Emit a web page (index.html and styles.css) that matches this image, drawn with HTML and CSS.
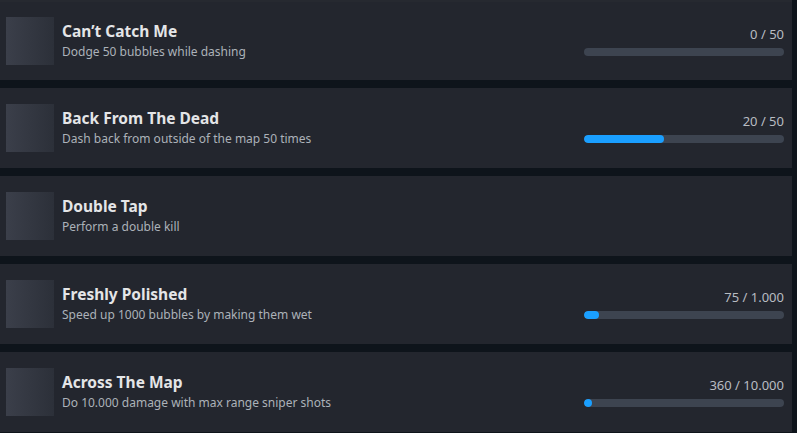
FILE: index.html
```html
<!DOCTYPE html>
<html>
<head>
<meta charset="utf-8">
<link rel="stylesheet" href="styles.css">
</head>
<body>
<div class="list">
  <div class="row first">
    <div class="icon"></div>
    <div class="info">
      <div class="title">Can’t Catch Me</div>
      <div class="desc">Dodge 50 bubbles while dashing</div>
    </div>
    <div class="progress">
      <div class="count">0 / 50</div>
      <div class="track"></div>
    </div>
  </div>
  <div class="row">
    <div class="icon"></div>
    <div class="info">
      <div class="title">Back From The Dead</div>
      <div class="desc">Dash back from outside of the map 50 times</div>
    </div>
    <div class="progress">
      <div class="count">20 / 50</div>
      <div class="track"><div class="fill" style="width:40%"></div></div>
    </div>
  </div>
  <div class="row">
    <div class="icon"></div>
    <div class="info">
      <div class="title">Double Tap</div>
      <div class="desc">Perform a double kill</div>
    </div>
  </div>
  <div class="row">
    <div class="icon"></div>
    <div class="info">
      <div class="title">Freshly Polished</div>
      <div class="desc">Speed up 1000 bubbles by making them wet</div>
    </div>
    <div class="progress">
      <div class="count">75 / 1.000</div>
      <div class="track"><div class="fill" style="width:7.5%"></div></div>
    </div>
  </div>
  <div class="row">
    <div class="icon"></div>
    <div class="info">
      <div class="title">Across The Map</div>
      <div class="desc">Do 10.000 damage with max range sniper shots</div>
    </div>
    <div class="progress">
      <div class="count">360 / 10.000</div>
      <div class="track"><div class="fill" style="width:3.6%"></div></div>
    </div>
  </div>
</div>
</body>
</html>
```
FILE: styles.css
```css
html, body {
  margin: 0;
  padding: 0;
  background: #0e141b;
}
body {
  font-family: "Noto Sans", "Open Sans", Arial, sans-serif;
  width: 797px;
  height: 433px;
  overflow: hidden;
}
.list {
  display: flex;
  flex-direction: column;
  gap: 8px;
  width: 792px;
}
.row {
  height: 80px;
  background: #23262e;
  display: flex;
  align-items: center;
  padding: 0 8px 0 6px;
  box-sizing: border-box;
}
.row.first {
  border-top: 2px solid #262930;
}
.icon {
  width: 48px;
  height: 48px;
  flex: none;
  background: linear-gradient(90deg, #3b3f4a 0%, #2c3039 100%);
}
.info {
  flex: 1;
  margin-left: 8px;
  margin-bottom: 2px;
  display: flex;
  flex-direction: column;
  gap: 2px;
}
.title {
  color: #e4e5e7;
  font-weight: 700;
  font-size: 15.5px;
  line-height: 20px;
}
.desc {
  color: #acb2b9;
  font-size: 12px;
  line-height: 17px;
}
.progress {
  width: 200px;
  flex: none;
  display: flex;
  flex-direction: column;
  align-items: flex-end;
  gap: 6px;
}
.count {
  color: #b8bcc2;
  font-size: 13px;
  line-height: 16px;
}
.track {
  width: 200px;
  height: 8px;
  border-radius: 4px;
  background: #3d4450;
  overflow: hidden;
}
.fill {
  height: 100%;
  min-width: 8px;
  border-radius: 4px;
  background: #1a9fff;
}
```
